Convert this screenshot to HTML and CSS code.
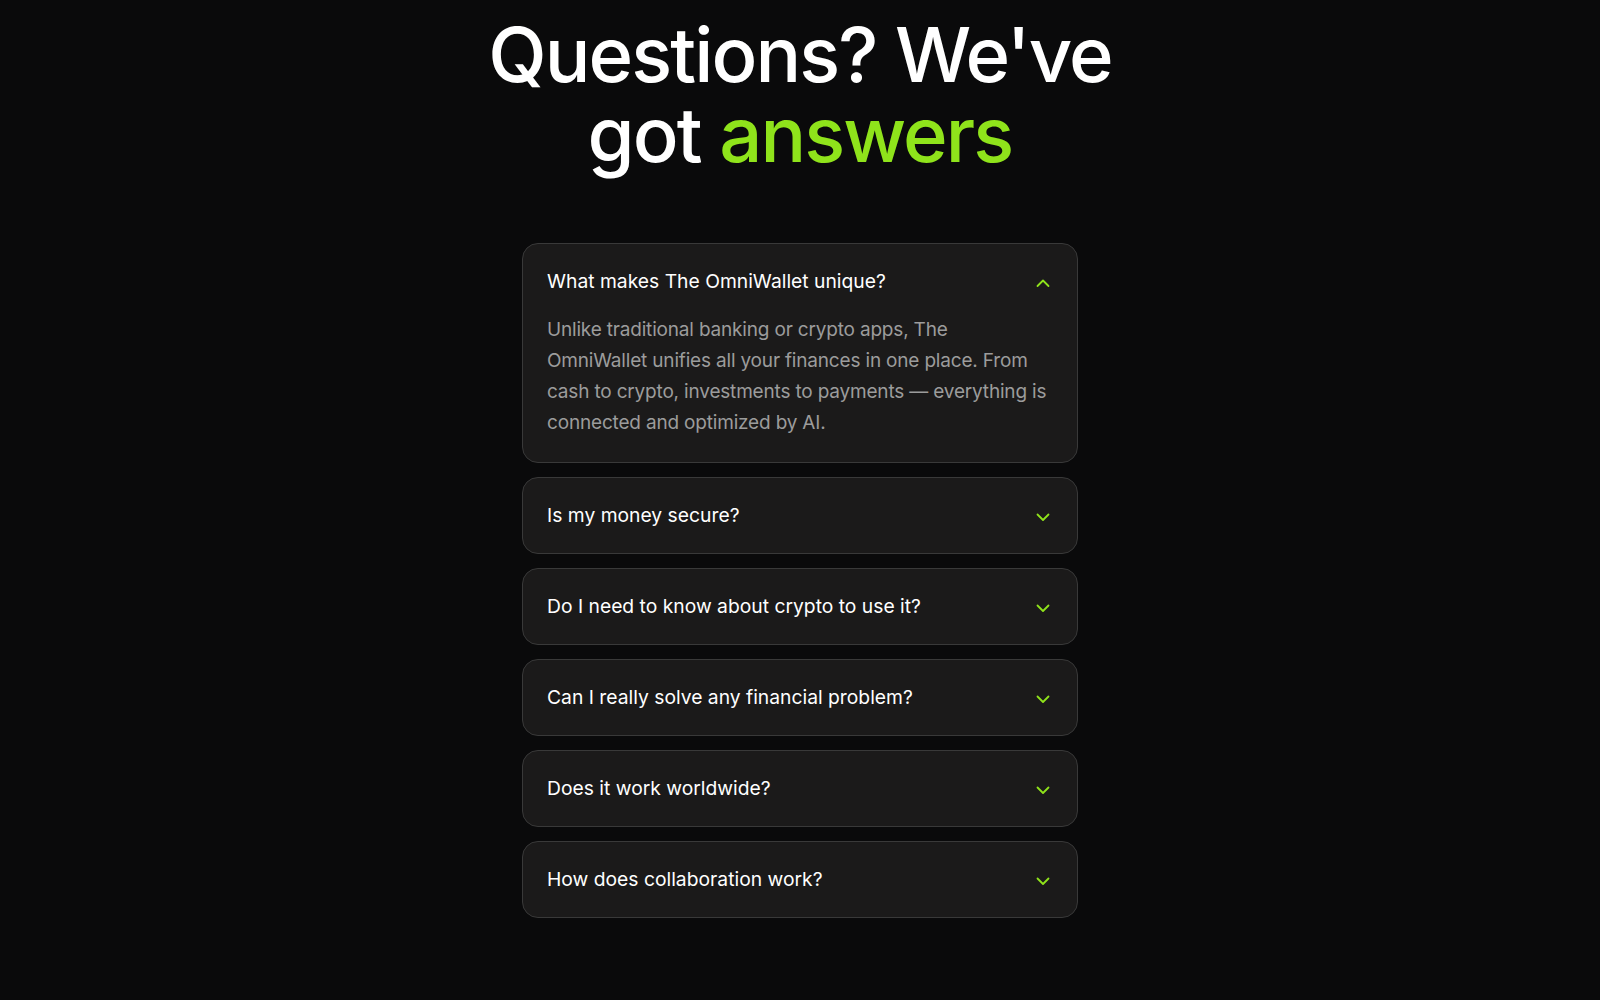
FILE: index.html
```html
<!DOCTYPE html>
<html>
	<head>
		<meta charset="utf-8">
		<title>FAQ - The OmniWallet</title>
		<link rel="stylesheet" href="styles.css">
	</head>
	<body>
		<section class="faq">
			<h1 class="faq-title">Questions? We've<br>got <span class="accent">answers</span></h1>

			<div class="faq-list">
				<div class="faq-item open">
					<div class="faq-question">
						<span>What makes The OmniWallet unique?</span>
						<svg class="chevron" viewBox="0 0 20 20"><path d="M4.5 13L10 7.5L15.5 13"/></svg>
					</div>
					<div class="faq-answer">
						Unlike traditional banking or crypto apps, The<br>OmniWallet unifies all your finances in one place. From cash to crypto, investments to payments — everything is connected and optimized by AI.
					</div>
				</div>
				<div class="faq-item">
					<div class="faq-question">
						<span>Is my money secure?</span>
						<svg class="chevron" viewBox="0 0 20 20"><path d="M4.5 7.5L10 13L15.5 7.5"/></svg>
					</div>
				</div>
				<div class="faq-item">
					<div class="faq-question">
						<span>Do I need to know about crypto to use it?</span>
						<svg class="chevron" viewBox="0 0 20 20"><path d="M4.5 7.5L10 13L15.5 7.5"/></svg>
					</div>
				</div>
				<div class="faq-item">
					<div class="faq-question">
						<span>Can I really solve any financial problem?</span>
						<svg class="chevron" viewBox="0 0 20 20"><path d="M4.5 7.5L10 13L15.5 7.5"/></svg>
					</div>
				</div>
				<div class="faq-item">
					<div class="faq-question">
						<span>Does it work worldwide?</span>
						<svg class="chevron" viewBox="0 0 20 20"><path d="M4.5 7.5L10 13L15.5 7.5"/></svg>
					</div>
				</div>
				<div class="faq-item">
					<div class="faq-question">
						<span>How does collaboration work?</span>
						<svg class="chevron" viewBox="0 0 20 20"><path d="M4.5 7.5L10 13L15.5 7.5"/></svg>
					</div>
				</div>
			</div>
		</section>
	</body>
</html>
```

FILE: styles.css
```css
html, body {
    margin: 0;
    padding: 0;
    background-color: #0a0a0b;
    font-family: Inter, "Helvetica Neue", Arial, sans-serif;
    color: #ffffff;
}

section.faq {
    display: flex;
    flex-direction: column;
    align-items: center;
    padding-top: 14px;
}

h1.faq-title {
    margin: 0 0 69px 0;
    font-size: 76px;
    font-weight: 500;
    line-height: 80px;
    letter-spacing: -1.9px;
    text-align: center;
}

span.accent {
    color: #8fe31b;
}

div.faq-list {
    width: 556px;
    display: flex;
    flex-direction: column;
    gap: 14px;
}

div.faq-item {
    background-color: #1b1a1a;
    border: 1px solid #393939;
    border-radius: 16px;
    padding: 24px 24px;
}

div.faq-question {
    display: flex;
    align-items: center;
    justify-content: space-between;
    font-size: 19.3px;
    line-height: 27px;
    font-weight: 400;
}

svg.chevron {
    width: 20px;
    height: 20px;
    margin-top: 3px;
    flex-shrink: 0;
    fill: none;
    stroke: #8fe31b;
    stroke-width: 1.8;
    stroke-linecap: round;
    stroke-linejoin: round;
}

div.faq-answer {
    margin-top: 19px;
    margin-right: -6px;
    color: #9c9c9c;
    font-size: 19px;
    line-height: 31px;
    letter-spacing: -0.18px;
}
```
